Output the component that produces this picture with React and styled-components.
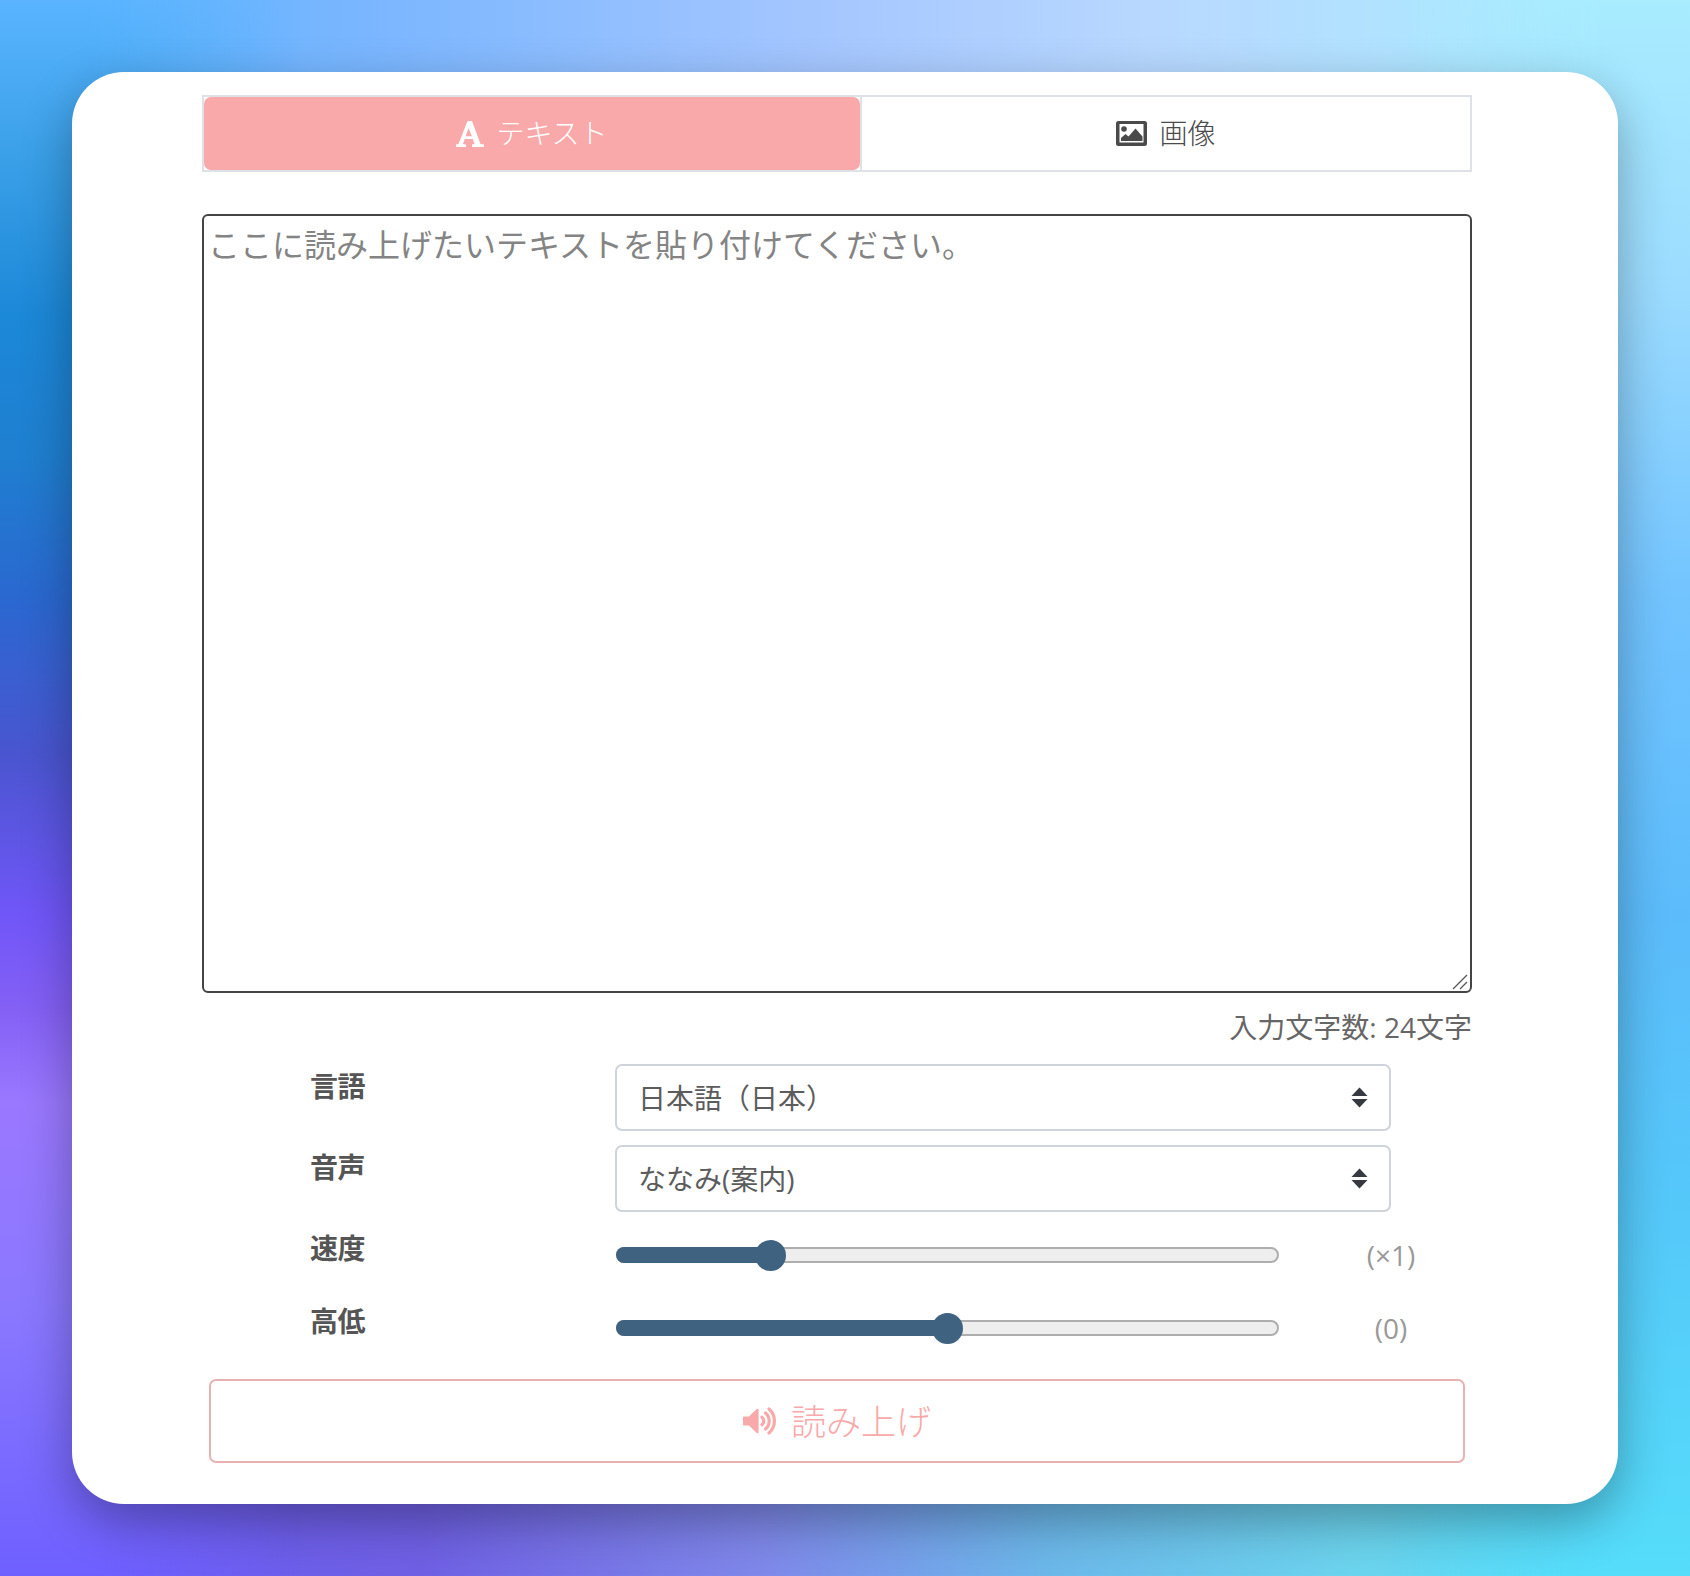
import { useState } from "react";
import styled, { createGlobalStyle } from "styled-components";

const FONT = `"Open Sans", "Noto Sans CJK JP", sans-serif`;

const GlobalStyle = createGlobalStyle`
	* {
		box-sizing: border-box;
	}
	html,
	body {
		margin: 0;
		padding: 0;
	}
	body {
		font-family: ${FONT};
		color: #555;
	}
`;

const Page = styled.div`
	position: relative;
	width: 1690px;
	height: 1576px;
	padding: 72px;
	overflow: hidden;
	background-color: #7ab8ff;
	background-repeat: no-repeat;
	background-image:
		linear-gradient(to right, #5ab4ff 0, #7ab6ff 22%, #a4c6ff 48%, #b8d8ff 68%, #b0e4ff 84%, #a8ecff 100%),
		linear-gradient(to right, #6c5cf8 0, #6f60e4 25%, #7f88ea 45%, #6cb8ea 62%, #6cd4ee 80%, #55ddfa 100%);
	background-size:
		100% 130px,
		100% 130px;
	background-position:
		0 0,
		0 100%;

	/* side colours fade in over the top and bottom strips */
	&::before,
	&::after {
		content: "";
		position: absolute;
		top: 0;
		bottom: 0;
		width: 320px;
	}
	&::before {
		left: 0;
		background: linear-gradient(
			to bottom,
			#5ab4ff 0,
			#3aa0e8 10%,
			#1c88d8 20%,
			#1f7fd0 29%,
			#2a68d0 38%,
			#4a55d0 48%,
			#7056f8 58%,
			#8460f5 64%,
			#9a78ff 70%,
			#8a78ff 83%,
			#6e60ff 100%
		);
		mask-image: linear-gradient(to right, #000 90px, transparent 300px);
	}
	&::after {
		right: 0;
		background: linear-gradient(
			to bottom,
			#a8ecff 0,
			#9cdcff 18%,
			#72c4ff 38%,
			#5cbcfb 58%,
			#55c8fa 76%,
			#55ddfa 100%
		);
		mask-image: linear-gradient(to left, #000 90px, transparent 300px);
	}
`;

const Card = styled.main`
	position: relative;
	z-index: 1;
	height: 1432px;
	padding: 23px 146px 42px 130px;
	background: #fff;
	border-radius: 52px;
	box-shadow: 0 18px 50px rgba(0, 0, 0, 0.32);
`;

const Tabs = styled.div`
	display: flex;
	height: 77px;
	margin-bottom: 42px;
`;

const Tab = styled.button`
	position: relative;
	display: flex;
	align-items: center;
	justify-content: center;
	flex: ${(p) => (p.$active ? "0 0 660px" : "1")};
	padding: 0;
	font-family: ${FONT};
	font-size: 28px;
	font-weight: 300;
	color: ${(p) => (p.$active ? "#fff" : "#4a4a4a")};
	background: #fff;
	border: 2px solid #dee2e6;
	border-left-width: ${(p) => (p.$active ? "2px" : "0")};
	border-radius: 0;
`;

const ActiveFill = styled.span`
	position: absolute;
	inset: 0;
	background: #f9a9a9;
	border-radius: 7px;
`;

const TabLabel = styled.span`
	position: relative;
	display: flex;
	align-items: center;
	gap: 12px;
`;

const TabText = styled.span`
	position: relative;
	top: -2px;
`;

const TextBoxWrap = styled.div`
	position: relative;
	height: 779px;
`;

const TextBox = styled.textarea`
	display: block;
	width: 100%;
	height: 100%;
	padding: 4px;
	font-family: ${FONT};
	font-size: 32px;
	font-weight: 400;
	color: #444;
	background: #fff;
	border: 2px solid #444;
	border-radius: 6px;
	outline: none;
	resize: vertical;

	&::placeholder {
		color: #848484;
	}
	&::-webkit-resizer {
		background: transparent;
	}
`;

const ResizeGrip = styled.svg`
	position: absolute;
	right: 4px;
	bottom: 3px;
	width: 16px;
	height: 16px;
	pointer-events: none;
`;

const Counter = styled.div`
	height: 71px;
	padding-top: 13px;
	font-size: 28px;
	font-weight: 400;
	line-height: 42px;
	color: #666;
	text-align: right;
`;

const Settings = styled.div`
	display: flex;
	flex-direction: column;
	gap: 14px;
	padding-left: 108px;
`;

const Row = styled.div`
	display: flex;
	height: ${(p) => (p.$slider ? "59px" : "67px")};
`;

const Label = styled.label`
	flex: 0 0 306px;
	padding-top: 2px;
	font-size: 28px;
	font-weight: 700;
	line-height: 40px;
	letter-spacing: -0.5px;
	color: #555;
`;

const SelectWrap = styled.div`
	position: relative;
	width: 776px;
	height: 67px;
	margin-left: -1px;
`;

const Select = styled.select`
	width: 100%;
	height: 100%;
	padding: 0 60px 0 21px;
	font-family: ${FONT};
	font-size: 28px;
	font-weight: 400;
	color: #5c5c5c;
	background: #fff;
	border: 2px solid #ced4da;
	border-radius: 7px;
	appearance: none;
	outline: none;
`;

const SelectArrows = styled.svg`
	position: absolute;
	top: 23px;
	right: 23px;
	width: 17px;
	height: 21px;
	pointer-events: none;
`;

const SliderArea = styled.div`
	display: flex;
	align-items: flex-start;
	padding-top: 21px;
`;

const Track = styled.div`
	position: relative;
	width: 663px;
	height: 16px;
	background: #eee;
	border: 2px solid #aeaeae;
	border-radius: 8px;
`;

const TrackFill = styled.div`
	position: absolute;
	top: -2px;
	bottom: -2px;
	left: -2px;
	background: #3f6280;
	border-radius: 8px 0 0 8px;
`;

const Range = styled.input`
	position: absolute;
	top: -9.5px;
	left: -2px;
	width: 662px;
	height: 31px;
	margin: 0;
	background: transparent;
	appearance: none;
	outline: none;

	&::-webkit-slider-runnable-track {
		height: 31px;
		background: transparent;
	}
	&::-webkit-slider-thumb {
		appearance: none;
		width: 31px;
		height: 31px;
		background: #3f6280;
		border: none;
		border-radius: 50%;
	}
`;

const SliderValue = styled.div`
	flex: 0 0 160px;
	margin-left: 32px;
	margin-top: -11px;
	font-size: 28px;
	font-weight: 400;
	line-height: 38px;
	color: #999;
	text-align: center;
`;

const SpeakButton = styled.button`
	display: flex;
	align-items: center;
	justify-content: center;
	gap: 14px;
	width: 1256px;
	height: 84px;
	margin: 21px 0 0 7px;
	padding: 0;
	font-family: ${FONT};
	font-size: 35px;
	font-weight: 300;
	color: #f9a9a9;
	background: #fff;
	border: 2px solid #e9b2b2;
	border-radius: 7px;
`;

const SpeakText = styled.span`
	position: relative;
	top: -2px;
`;

function SlabAIcon() {
	return (
		<svg width="28" height="26" viewBox="0 0 28 26" fill="#fff">
			<path
				fillRule="evenodd"
				d="M11.5 0 H16 L24.5 23 L28 23.5 V26 H16 V23.5 L18.5 23 L16.8 18 H8.7 L7 23 L10 23.5 V26 H0 V23.5 L2.5 23 Z M12.6 7 L9.6 15.2 H15.9 Z"
			/>
		</svg>
	);
}

function PictureIcon() {
	return (
		<svg width="31" height="25" viewBox="0 0 31 25" fill="#4a4a4a">
			<path
				fillRule="evenodd"
				d="M2.5 0 H28.5 A2.5 2.5 0 0 1 31 2.5 V22.5 A2.5 2.5 0 0 1 28.5 25 H2.5 A2.5 2.5 0 0 1 0 22.5 V2.5 A2.5 2.5 0 0 1 2.5 0 Z M3.5 3 V21.5 H27.5 V3 Z"
			/>
			<circle cx="8" cy="8" r="2.8" />
			<path d="M5 20 V17 L9.5 13 L12.5 15.5 L19.5 7.5 L26.5 15.5 V20 Z" />
		</svg>
	);
}

function SpeakerIcon() {
	return (
		<svg width="34" height="28" viewBox="0 0 34 28" fill="none">
			<path
				d="M0.8 9.5 H6 L13.5 2.2 Q15.6 1 15.6 3 V25 Q15.6 27 13.5 25.8 L6 18.5 H0.8 Q0 18.5 0 17.5 V10.5 Q0 9.5 0.8 9.5 Z"
				fill="#f9a9a9"
			/>
			<g stroke="#f9a9a9" strokeWidth="3.2" strokeLinecap="round">
				<path d="M19 10.2 A5 5 0 0 1 19 17.8" />
				<path d="M22.5 6 A10.5 10.5 0 0 1 22.5 22" />
				<path d="M26 2 A16 16 0 0 1 26 26" />
			</g>
		</svg>
	);
}

function Slider({ label, min, max, step, initial, format }) {
	const [value, setValue] = useState(initial);
	const ratio = (value - min) / (max - min);
	return (
		<Row $slider>
			<Label>{label}</Label>
			<SliderArea>
				<Track>
					<TrackFill style={{ width: `${ratio * 631 + 15}px` }} />
					<Range
						type="range"
						min={min}
						max={max}
						step={step}
						value={value}
						onChange={(e) => setValue(Number(e.target.value))}
					/>
				</Track>
				<SliderValue>({format(value)})</SliderValue>
			</SliderArea>
		</Row>
	);
}

function Picker({ label, options }) {
	return (
		<Row>
			<Label>{label}</Label>
			<SelectWrap>
				<Select>
					{options.map((o) => (
						<option key={o}>{o}</option>
					))}
				</Select>
				<SelectArrows viewBox="0 0 17 21">
					<path d="M8.5 0.5 L16.5 9 H0.5 Z" fill="#343a40" />
					<path d="M0.5 12 H16.5 L8.5 20.5 Z" fill="#343a40" />
				</SelectArrows>
			</SelectWrap>
		</Row>
	);
}

function App() {
	return (
		<Page>
			<GlobalStyle />
			<Card>
				<Tabs>
					<Tab $active>
						<ActiveFill />
						<TabLabel>
							<SlabAIcon />
							<TabText>テキスト</TabText>
						</TabLabel>
					</Tab>
					<Tab>
						<TabLabel>
							<PictureIcon />
							<TabText>画像</TabText>
						</TabLabel>
					</Tab>
				</Tabs>
				<TextBoxWrap>
					<TextBox placeholder="ここに読み上げたいテキストを貼り付けてください。" />
					<ResizeGrip viewBox="0 0 16 16">
						<path d="M1 15 L15 1 M8 15 L15 8" stroke="#555" strokeWidth="1.3" fill="none" />
					</ResizeGrip>
				</TextBoxWrap>
				<Counter>入力文字数: 24文字</Counter>
				<Settings>
					<Picker label="言語" options={["日本語（日本）"]} />
					<Picker label="音声" options={["ななみ(案内)"]} />
					<Slider
						label="速度"
						min={0.1}
						max={4.2}
						step={0.1}
						initial={1}
						format={(v) => `×${v}`}
					/>
					<Slider
						label="高低"
						min={-20}
						max={20}
						step={1}
						initial={0}
						format={(v) => v}
					/>
				</Settings>
				<SpeakButton>
					<SpeakerIcon />
					<SpeakText>読み上げ</SpeakText>
				</SpeakButton>
			</Card>
		</Page>
	);
}

export default App;
